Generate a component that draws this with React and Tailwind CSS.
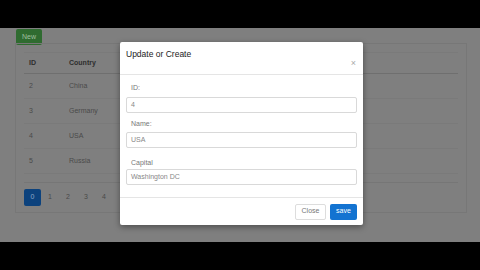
import React from 'react';

const rows = [
  { id: 2, country: 'China' },
  { id: 3, country: 'Germany' },
  { id: 4, country: 'USA' },
  { id: 5, country: 'Russia' },
];

const Field = ({ label, value, gap = 'mb-[4px]' }) => (
  <div className="mb-[5px]">
    <div className={`text-[7px] text-[#777] pl-[5px] leading-[11px] ${gap}`}>{label}</div>
    <div className="h-[16px] border border-[#d9d9d9] rounded-[2px] px-[4px] text-[7px] leading-[14px] text-[#888]">
      {value}
    </div>
  </div>
);

export default function App() {
  return (
    <div className="w-[480px] h-[270px] flex flex-col bg-black overflow-hidden font-['Liberation_Sans',Arial,sans-serif]">
      <div className="h-[28px] bg-black" />

      {/* Page under the backdrop */}
      <div className="relative h-[214px] bg-[#7f7f7f] pl-[15px] pr-[13px]">
        <div className="pt-[1px] pl-[1px]">
          <div className="w-[26px] h-[16px] bg-[#2f6b30] rounded-[2px] text-[7px] text-[#9fbf9f] flex items-center justify-center">New</div>
        </div>

        <div className="mt-[-2px] h-[170px] border border-[#777] px-[8px] pt-[8px]">
          {/* Table */}
          <div className="border-t border-[#7a7a7a]">
            <div className="flex h-[21px] items-center text-[7px] font-bold text-[#2e2e2e] border-b border-[#6f6f6f]">
              <div className="w-[45px] pl-[5px]">ID</div>
              <div>Country</div>
            </div>
            {rows.map((r) => (
              <div key={r.id} className="flex h-[25px] items-center text-[7px] text-[#4a4a4a] border-b border-[#7a7a7a]">
                <div className="w-[45px] pl-[5px]">{r.id}</div>
                <div>{r.country}</div>
              </div>
            ))}
          </div>
          <div className="mt-[8px] border-t border-[#767676] pt-[6px] flex text-[7px] text-[#4a4a4a]">
            <div className="w-[17px] h-[17px] bg-[#0c427d] rounded-[2px] flex items-center justify-center text-[#8fa8c8]">0</div>
            {[1, 2, 3, 4].map((n) => (
              <div key={n} className="w-[18px] h-[17px] flex items-center justify-center">{n}</div>
            ))}
          </div>
        </div>

        {/* Modal */}
        <div className="absolute left-[120px] top-[14px] w-[243px] h-[183px] bg-white rounded-[2px] shadow-[0_2px_6px_rgba(0,0,0,0.4)] flex flex-col">
          <div className="h-[33px] border-b border-[#e5e5e5] relative px-[6px] pt-[6px]">
            <div className="text-[8.5px] text-[#222] leading-[12px]">Update or Create</div>
            <div className="absolute right-[7px] top-[15px] text-[9px] text-[#aaa]">×</div>
          </div>
          <div className="flex-1 px-[6px] pt-[7px]">
            <Field label="ID:" value="4" />
            <Field label="Name:" value="USA" gap="mb-[3px]" />
            <div className="pt-[4px]">
              <Field label="Capital" value="Washington DC" gap="mb-[1px]" />
            </div>
          </div>
          <div className="h-[28px] border-t border-[#e5e5e5] flex items-center justify-end gap-[4px] px-[6px]">
            <div className="w-[31px] h-[16px] border border-[#ddd] rounded-[2px] text-[7px] text-[#777] flex items-center justify-center">Close</div>
            <div className="w-[27px] h-[16px] bg-[#1373d1] rounded-[2px] text-[7px] text-white flex items-center justify-center">save</div>
          </div>
        </div>
      </div>

      <div className="h-[28px] bg-black" />
    </div>
  );
}
